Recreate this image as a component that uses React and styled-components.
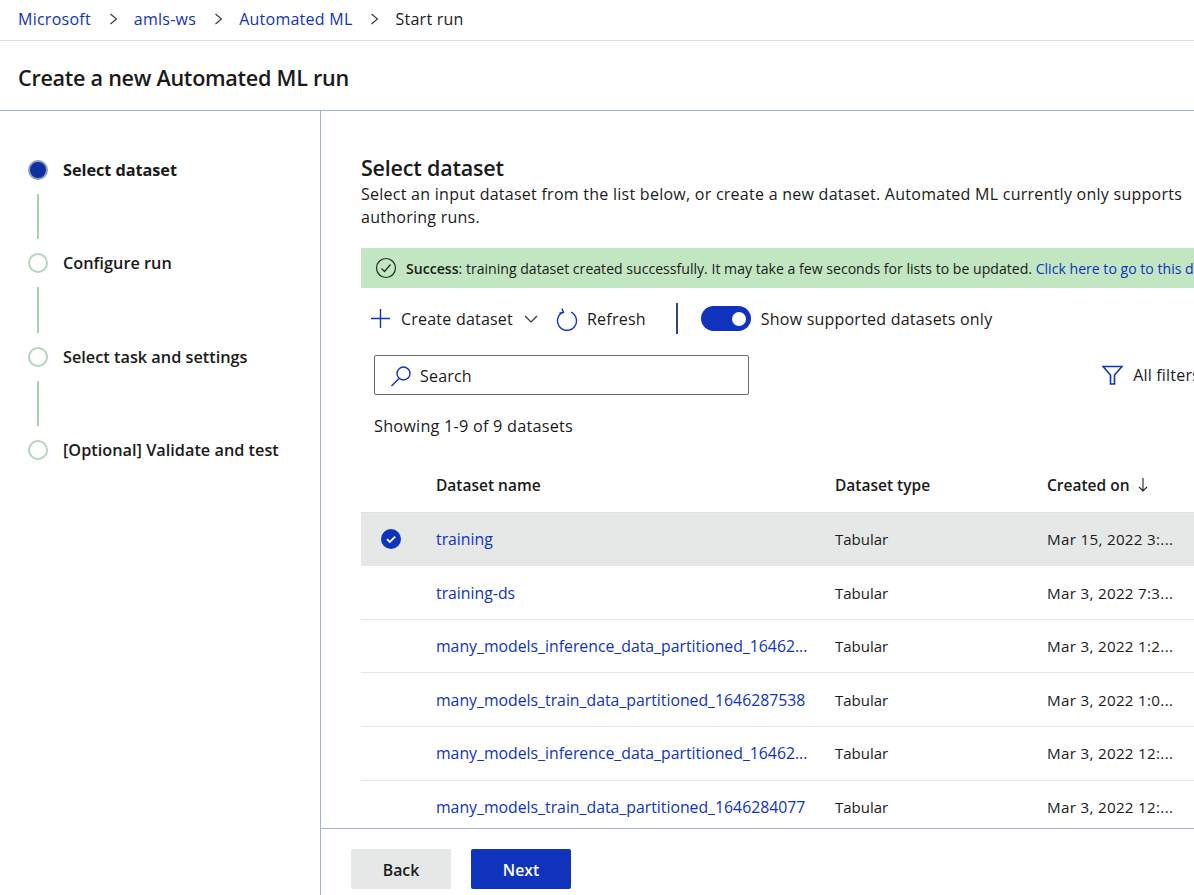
import React from 'react';
import styled, { createGlobalStyle } from 'styled-components';

const BLUE = '#0f33bd';
const INK = '#1a1a1a';
const RULE = '#a3b2cc';

const GlobalStyle = createGlobalStyle`
  html, body { margin: 0; padding: 0; height: 100%; overflow: hidden; background: #fff; }
  body { font-family: "Open Sans", "Noto Sans", "Liberation Sans", sans-serif; color: ${INK}; }
  * { box-sizing: border-box; }
`;

const Page = styled.div`
  width: 1194px;
  height: 895px;
  display: flex;
  flex-direction: column;
  overflow: hidden;
`;

const Breadcrumbs = styled.nav`
  height: 41px;
  flex: none;
  display: flex;
  align-items: center;
  padding: 0 0 2px 18px;
  font-size: 16px;
  letter-spacing: 0.25px;
  border-bottom: 1px solid #d9e5d9;
`;

const Crumb = styled.span`
  color: ${props => (props.$current ? INK : BLUE)};
`;

const CrumbSep = styled.svg`
  width: 9px;
  height: 12px;
  margin: 0 16px 0 18px;
  fill: none;
  stroke: #333;
  stroke-width: 1.1;
`;

const TitleBar = styled.header`
  height: 70px;
  flex: none;
  display: flex;
  align-items: center;
  padding: 13px 0 10px 18px;
  border-bottom: 1px solid ${RULE};
`;

const Title = styled.h1`
  margin: 0;
  font-size: 21.6px;
  font-weight: 600;
  letter-spacing: -0.28px;
`;

const Body = styled.div`
  flex: 1;
  min-height: 0;
  display: flex;
`;

const Sidebar = styled.aside`
  width: 321px;
  flex: none;
  border-right: 1px solid ${RULE};
  padding: 48px 0 0 28px;
`;

const Step = styled.div`
  display: flex;
  align-items: center;
  gap: 15px;
  height: 22px;
  font-size: 16.3px;
  font-weight: ${props => (props.$active ? 700 : 600)};
  letter-spacing: ${props => (props.$active ? '-0.05px' : '0')};
  white-space: nowrap;
`;

const StepDot = styled.span`
  width: 20px;
  height: 20px;
  border-radius: 50%;
  flex: none;
  border: 2px solid ${props => (props.$active ? '#8a9cc4' : '#b4d4bd')};
  background: ${props => (props.$active ? '#10309f' : '#fff')};
`;

const StepLine = styled.div`
  width: 2px;
  height: 45.3px;
  margin: 13px 0 13px 9px;
  background: #a9d3b0;
`;

const Main = styled.main`
  flex: 1;
  min-width: 0;
  display: flex;
  flex-direction: column;
`;

const Scroll = styled.div`
  flex: 1;
  min-height: 0;
  overflow: hidden;
  padding: 44px 0 0 40px;
`;

const Heading = styled.h2`
  margin: 0;
  height: 28px;
  font-size: 21.5px;
  line-height: 26px;
  font-weight: 600;
  letter-spacing: -0.2px;
`;

const Description = styled.p`
  margin: 0;
  width: 826px;
  font-size: 16px;
  line-height: 23px;
  letter-spacing: 0.26px;
`;

const Banner = styled.div`
  width: 833px;
  height: 40px;
  margin-top: 19px;
  padding-left: 14px;
  display: flex;
  align-items: center;
  gap: 9px;
  background: #c3e6c2;
  font-size: 14.1px;
  white-space: nowrap;
  overflow: hidden;
`;

const BannerText = styled.span`
  b { font-weight: 600; }
  a { color: ${BLUE}; }
`;

const Toolbar = styled.div`
  height: 45px;
  margin-top: 8px;
  padding-left: 9px;
  display: flex;
  align-items: center;
  font-size: 16px;
  letter-spacing: 0.22px;
`;

const Icon = styled.svg`
  flex: none;
  fill: none;
  stroke: ${props => props.$color || BLUE};
  stroke-width: ${props => props.$stroke || 1.5};
  margin-left: ${props => props.$gap || 0}px;
`;

const ToolLabel = styled.span`
  margin-left: ${props => props.$gap}px;
  white-space: nowrap;
`;

const Divider = styled.span`
  width: 2px;
  height: 31px;
  margin: 0 23px 0 30px;
  background: #33457a;
`;

const Toggle = styled.span`
  width: 50px;
  height: 25px;
  border-radius: 13px;
  background: ${BLUE};
  display: flex;
  align-items: center;
  justify-content: flex-end;
  padding-right: 5px;
  margin-right: 10px;
  &::after {
    content: "";
    width: 14px;
    height: 14px;
    border-radius: 50%;
    background: #fff;
  }
`;

const FilterRow = styled.div`
  margin-top: 14px;
  width: 833px;
  padding-left: 13px;
  display: flex;
  align-items: center;
  justify-content: space-between;
`;

const SearchBox = styled.div`
  width: 375px;
  height: 40px;
  padding: 1px 0 0 15px;
  display: flex;
  align-items: center;
  gap: 8px;
  border: 1px solid #6b6b6b;
  border-radius: 2px;
  font-size: 16px;
  letter-spacing: 0.2px;
`;

const AllFilters = styled.div`
  display: flex;
  align-items: center;
  gap: 10px;
  margin-right: -6px;
  font-size: 16px;
  letter-spacing: 0.2px;
  white-space: nowrap;
`;

const Count = styled.div`
  margin: 19px 0 0 13px;
  height: 24px;
  line-height: 24px;
  font-size: 16.3px;
  letter-spacing: 0.2px;
`;

const HeadRow = styled.div`
  display: grid;
  grid-template-columns: 75px 399px 212px 147px;
  align-items: center;
  width: 833px;
  height: 54.7px;
  margin-top: 20px;
  border-bottom: 1px solid #d5e6d5;
  white-space: nowrap;
`;

const Row = styled.div`
  display: grid;
  grid-template-columns: 75px 399px 212px 147px;
  align-items: center;
  width: 833px;
  height: 53.6px;
  font-size: 15px;
  white-space: nowrap;
  background: ${props => (props.$selected ? '#e6e8e8' : 'transparent')};
  border-bottom: 1px solid ${props => (props.$selected ? 'transparent' : '#e6e6e6')};
`;

const HeadCell = styled.span`
  font-size: 15.5px;
  font-weight: 600;
  display: flex;
  align-items: center;
  gap: 9px;
`;

const CheckCell = styled.span`
  display: flex;
  justify-content: center;
  padding-right: 16px;
`;

const NameLink = styled.a`
  color: ${BLUE};
  font-size: 15.8px;
`;

const DateCell = styled.span`
  font-size: 15.2px;
  letter-spacing: 0.3px;
`;

const Footer = styled.footer`
  height: 67px;
  flex: none;
  display: flex;
  gap: 20px;
  padding: 20px 0 0 30px;
  border-top: 1px solid ${RULE};
`;

const FooterButton = styled.button`
  width: 100px;
  height: 40px;
  border: 0;
  border-radius: 2px;
  padding: 2px 0 0;
  font: 600 15.8px "Open Sans", sans-serif;
  background: ${props => (props.$primary ? BLUE : '#e6e8e8')};
  color: ${props => (props.$primary ? '#fff' : INK)};
`;

const steps = ['Select dataset', 'Configure run', 'Select task and settings', '[Optional] Validate and test'];

const datasets = [
  ['training', 'Mar 15, 2022 3:...', true],
  ['training-ds', 'Mar 3, 2022 7:3...'],
  ['many_models_inference_data_partitioned_16462...', 'Mar 3, 2022 1:2...'],
  ['many_models_train_data_partitioned_1646287538', 'Mar 3, 2022 1:0...'],
  ['many_models_inference_data_partitioned_16462...', 'Mar 3, 2022 12:...'],
  ['many_models_train_data_partitioned_1646284077', 'Mar 3, 2022 12:...'],
];

const Chevron = () => (
  <CrumbSep viewBox="0 0 9 12"><path d="M1.5 1l6 5-6 5" /></CrumbSep>
);

const App = () => (
  <Page>
    <GlobalStyle />
    <Breadcrumbs>
      <Crumb>Microsoft</Crumb>
      <Chevron />
      <Crumb>amls-ws</Crumb>
      <Chevron />
      <Crumb>Automated ML</Crumb>
      <Chevron />
      <Crumb $current>Start run</Crumb>
    </Breadcrumbs>
    <TitleBar>
      <Title>Create a new Automated ML run</Title>
    </TitleBar>
    <Body>
      <Sidebar>
        {steps.map((step, i) => (
          <React.Fragment key={step}>
            <Step $active={i === 0}>
              <StepDot $active={i === 0} />
              {step}
            </Step>
            {i < steps.length - 1 && <StepLine />}
          </React.Fragment>
        ))}
      </Sidebar>
      <Main>
        <Scroll>
          <Heading>Select dataset</Heading>
          <Description>
            Select an input dataset from the list below, or create a new dataset. Automated ML currently only supports authoring runs.
          </Description>
          <Banner>
            <Icon width="22" height="22" viewBox="0 0 22 22" $color="#1f2a1f" $stroke={1.2}>
              <circle cx="11" cy="11" r="9.5" />
              <path d="M6.5 11.5l3 3 6-7" />
            </Icon>
            <BannerText>
              <b>Success</b>: training dataset created successfully. It may take a few seconds for lists to be updated.{' '}
              <a>Click here to go to this dataset</a>
            </BannerText>
          </Banner>
          <Toolbar>
            <Icon width="21" height="21" viewBox="0 0 21 21" $stroke={1.4}>
              <path d="M10.5 1v19M1 10.5h19" />
            </Icon>
            <ToolLabel $gap={10}>Create dataset</ToolLabel>
            <Icon width="16" height="10" viewBox="0 0 16 10" $gap={10} $color="#333" $stroke={1.2}>
              <path d="M2 2l6 6 6-6" />
            </Icon>
            <Icon width="22" height="24" viewBox="0 0 22 24" $gap={17} $stroke={1.4}>
              <path d="M7 5.2a9.5 9.5 0 1 0 8 0" />
              <path d="M6 1.5l1.5 4-4 .8" />
            </Icon>
            <ToolLabel $gap={9}>Refresh</ToolLabel>
            <Divider />
            <Toggle />
            <span>Show supported datasets only</span>
          </Toolbar>
          <FilterRow>
            <SearchBox>
              <Icon width="22" height="22" viewBox="0 0 22 22" $stroke={1.4}>
                <circle cx="13.5" cy="8.5" r="6.5" />
                <path d="M9 13.5L1.5 21" />
              </Icon>
              Search
            </SearchBox>
            <AllFilters>
              <Icon width="21" height="20" viewBox="0 0 21 20" $stroke={1.6}>
                <path d="M1 1.5h19l-7.5 8.5v9h-4v-9z" />
              </Icon>
              All filters
            </AllFilters>
          </FilterRow>
          <Count>Showing 1-9 of 9 datasets</Count>
          <HeadRow>
            <span />
            <HeadCell>Dataset name</HeadCell>
            <HeadCell>Dataset type</HeadCell>
            <HeadCell>
              Created on
              <svg width="10" height="15" viewBox="0 0 10 15" fill="none" stroke="#222" strokeWidth="1.1">
                <path d="M5 1v13M1 10l4 4 4-4" />
              </svg>
            </HeadCell>
          </HeadRow>
          {datasets.map(([name, created, selected]) => (
            <Row key={name + created} $selected={selected}>
              <CheckCell>
                {selected && (
                  <svg width="20" height="20" viewBox="0 0 20 20">
                    <circle cx="10" cy="10" r="10" fill={BLUE} />
                    <path d="M6 10.2l2.8 2.8L14.2 7.6" fill="none" stroke="#fff" strokeWidth="1.8" />
                  </svg>
                )}
              </CheckCell>
              <NameLink>{name}</NameLink>
              <span>Tabular</span>
              <DateCell>{created}</DateCell>
            </Row>
          ))}
        </Scroll>
        <Footer>
          <FooterButton>Back</FooterButton>
          <FooterButton $primary>Next</FooterButton>
        </Footer>
      </Main>
    </Body>
  </Page>
);

export default App;
